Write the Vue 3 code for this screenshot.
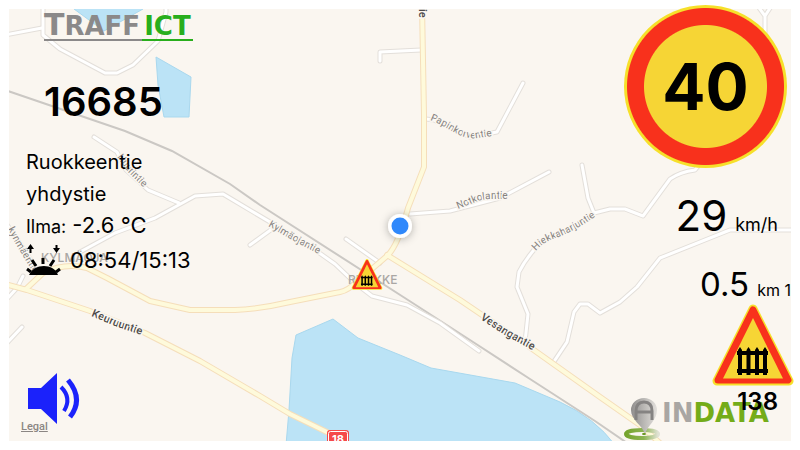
<script setup>
import { ref } from 'vue'

const soundOn = ref(true)

const mainRoads = [
  'M422 5 L424 115 L424 167 L408 208 Q398 246 387 256 L352 286 Q345 292 335 293 L290 302 Q260 309 235 310 L190 310 L150 301 L107 278 L87 268 Q65 262 43 273 L26 289',
  'M5 284 L27 290 L90 311 L145 333 L200 361 L260 396 L290 414 L335 436',
  'M387 255 L460 300 L531 348 L600 397 L640 425 L662 445'
]

const sideRoads = [
  'M5 35 L42 28',
  'M43 5 L43 35 L60 49 L105 73 L117 73 L133 65 L158 41 L166 12 L166 5',
  'M94 137 L117 152 L126 170 L148 190 L179 203',
  'M80 252 L115 233 L155 218 L195 196 L223 194 L270 222 L318 252 L335 264 L355 283 L372 296 L407 305 L440 323 L479 351',
  'M250 245 L272 229',
  'M346 239 L380 263',
  'M380 61 L380 52 L421 50',
  'M426 119 L434 120 L470 137 L497 132 L523 83',
  'M410 214 L450 211 L500 198 L549 172',
  'M582 165 L588 198 L594 213 L568 230 L540 243 Q526 258 519 272 L517 287 L528 314 L525 342',
  'M594 213 L610 209 L625 209 L643 216 L670 179 Q680 172 695 170 L715 145',
  'M553 363 L567 342 L574 312 L580 304 L588 304 L600 313 L620 302 L637 287 L660 258 L730 230 L795 230',
  'M757 5 L765 16 L772 5 M765 16 L765 40',
  'M5 222 L18 240 L36 268',
  'M5 345 L22 327',
  'M5 301 L17 288 L23 276'
]

const streets = [
  { id: 'papin', name: 'Papinkorventie', d: 'M430 120 Q440 124 450 130 Q466 140 478 138 L505 134', cls: 'minor' },
  { id: 'notko', name: 'Notkolantie', d: 'M458 209 L478 201 Q484 199 492 199 L530 199', cls: 'minor' },
  { id: 'hiekka', name: 'Hiekkaharjuntie', d: 'M536 251 Q543 242 556 238 Q575 231 602 212', cls: 'minor' },
  { id: 'kylma', name: 'Kylmäojantie', d: 'M268 226 L292 240 L330 260', cls: 'minor' },
  { id: 'huurin', name: 'Huurintie', d: 'M117 157 L128 172 L158 202', cls: 'minor' },
  { id: 'kynma', name: 'kynmäentie', d: 'M8 229 L17 246 L40 284', cls: 'minor' },
  { id: 'keuruu', name: 'Keuruuntie', d: 'M91 316 L115 326 L165 343', cls: 'major' },
  { id: 'vesanka', name: 'Vesangantie', d: 'M480 319 L505 335 L550 360', cls: 'major' }
]
</script>

<template>
  <main class="screen">
    <div class="map-frame">
      <svg class="map" viewBox="9 9 782 432" preserveAspectRatio="xMidYMid slice" role="img" aria-label="Map">
        <defs>
          <symbol id="crossing" viewBox="0 0 82 82">
            <path d="M41 5 L77 77 H5 Z" fill="#f6e02a" stroke="#f6e02a" stroke-width="9" stroke-linejoin="round" />
            <path d="M41 6 L76 76 H6 Z" fill="#f8311c" stroke="#f8311c" stroke-width="7" stroke-linejoin="round" />
            <path d="M41 14 L71 74.500 H11 Z" fill="#f6d535" />
            <path d="M25 47 h31 v4 h-31z M25 65 h31 v4 h-31z M26 71 V46 l2 -3 l2 3 V71z M34.500 71 V46 l2 -3 l2 3 V71z M43 71 V46 l2 -3 l2 3 V71z M51 71 V46 l2 -3 l2 3 V71z" fill="#000" />
          </symbol>
          <filter id="dotShadow" x="-60%" y="-60%" width="220%" height="220%">
            <feDropShadow dx="0" dy="1" stdDeviation="4" flood-color="#000" flood-opacity="0.3" />
          </filter>
          <path v-for="s in streets" :id="s.id" :key="s.id" :d="s.d" />
        </defs>

        <rect x="0" y="0" width="800" height="450" fill="#faf6f0" />
        <g class="water">
          <path d="M74 5 V9 L104 31 L143 9 V5 Z" />
          <path d="M156 57 L191 77 L189 117 L164 117 L158 85 Z" />
          <path d="M286 445 L289 410 L292 358 L296 335 L333 319 L358 338 L400 355 L431 368 L515 383 L560 402 Q595 418 615 445 Z" />
        </g>
        <path class="rail" d="M5 90 L125 131 L172 151 L230 184 L260 205 L408 300 L470 340 L530 379 L595 421 L630 445" />

        <path v-for="(d, i) in sideRoads" :key="'sc' + i" :d="d" class="side-case" />
        <path v-for="(d, i) in sideRoads" :key="'s' + i" :d="d" class="side" />
        <path v-for="(d, i) in mainRoads" :key="'mc' + i" :d="d" class="main-case" />
        <path v-for="(d, i) in mainRoads" :key="'m' + i" :d="d" class="main" />

        <text v-for="s in streets" :key="'t' + s.id" class="street" :class="s.cls">
          <textPath :href="'#' + s.id">{{ s.name }}</textPath>
        </text>
        <text class="street major" transform="translate(419 9) rotate(90)">ie</text>
        <text class="place" x="41" y="262">KYLMÄOJA</text>
        <text class="place" x="348" y="284">RUOKKE</text>

        <rect x="327" y="430" width="22" height="22" rx="3" fill="#f5494a" />
        <rect x="328.500" y="431.500" width="19" height="22" rx="2" fill="none" stroke="#fff" stroke-width="1" />
        <text class="shield" x="338" y="443">18</text>

        <circle cx="400" cy="226" r="12" fill="#fff" filter="url(#dotShadow)" />
        <circle cx="400" cy="226" r="8.500" fill="#2f88fb" />
        <use href="#crossing" x="351" y="259" width="32" height="31" />
      </svg>
    </div>

    <div class="hud">
      <section class="left">
        <h1 class="brand">
          <span class="brand-grey"><span class="brand-cap">T</span>RAFF</span><span class="brand-green">ICT</span>
        </h1>
        <div class="readouts">
          <p class="road-no">16685</p>
          <p class="road-name">Ruokkeentie<br>yhdystie</p>
          <p class="weather"><span class="weather-label">Ilma:</span><span>-2.6 °C</span></p>
          <p class="sun">
            <svg width="36" height="32" viewBox="0 0 36 32" aria-hidden="true">
              <path d="M3 31 C8 19 28 19 32 31 Z" />
              <g stroke="#000" stroke-width="3">
                <path d="M17 14 V20 M6 16 L10 22 M28 16 L24 22" />
                <path d="M1 25 L5 28 M34 25 L30 28" />
                <path d="M4.500 3 V9 M30.500 1 V6" stroke-width="2" />
              </g>
              <path d="M4.500 0 L8 5 H1 Z M30.500 9 L34 4 H27 Z" />
            </svg>
            <span>08:54/15:13</span>
          </p>
        </div>
        <div class="corner">
          <button class="sound" type="button" aria-label="Sound" :aria-pressed="soundOn" @click="soundOn = !soundOn">
            <svg width="53" height="53" viewBox="0 0 53 53" aria-hidden="true">
              <path d="M1 16 H14 L30 1 V52 L14 37 H1 Z" fill="#1b22fb" />
              <g v-if="soundOn" fill="none" stroke="#1b22fb" stroke-width="4">
                <path d="M34 15 Q45 26 37 39" />
                <path d="M41 8 Q57 27 43 45" stroke-width="5" />
              </g>
            </svg>
          </button>
          <a class="legal" href="#">Legal</a>
        </div>
      </section>

      <section class="right">
        <div class="limit">40</div>
        <p class="speed"><span class="speed-value">29</span><span class="unit">km/h</span></p>
        <p class="distance"><span class="distance-value">0.5</span><span class="unit distance-unit">km 1</span></p>
        <svg class="warning" width="82" height="82" role="img" aria-label="Level crossing"><use href="#crossing" width="82" height="82" /></svg>
        <p class="count">138</p>
        <div class="vendor">
          <svg width="38" height="44" viewBox="0 0 38 44" aria-hidden="true">
            <defs>
              <linearGradient id="pin" x1="0" x2="1">
                <stop offset="0" stop-color="#908e8d" />
                <stop offset="0.500" stop-color="#bab8b5" />
                <stop offset="1" stop-color="#e3e0dc" />
              </linearGradient>
              <linearGradient id="ring" x1="0" x2="1">
                <stop offset="0" stop-color="#75a32c" />
                <stop offset="0.550" stop-color="#8db452" />
                <stop offset="1" stop-color="#e0e2d4" />
              </linearGradient>
            </defs>
            <ellipse cx="18" cy="37" rx="16" ry="4" fill="none" stroke="url(#ring)" stroke-width="4" />
            <path d="M21 37 C18 28 7 23 7 13 A13 12 0 0 1 33 13 C33 23 24 28 21 37 Z" fill="url(#pin)" />
            <path d="M12 23 V14 Q12 5 20 5 Q28 5 28 14 V23 M12 15 H28" fill="none" stroke="#858382" stroke-width="3" />
            <ellipse cx="20" cy="37" rx="2" ry="1" fill="#5f9216" />
          </svg>
          <span class="vendor-name"><span class="vendor-grey">IN</span>DATA</span>
        </div>
      </section>
    </div>
  </main>
</template>

<style>
body {
  margin: 0;
  background: #fff;
}
</style>

<style scoped>
.screen {
  display: grid;
  font-family: Inter, "Liberation Sans", sans-serif;
  color: #000;
  background: #fff;
}
.map-frame,
.hud {
  grid-area: 1 / 1;
}
.map-frame {
  padding: 9px;
}
.map {
  display: block;
  width: 100%;
  height: auto;
}
.water path {
  fill: #bbe3f6;
  stroke: #a9d8ee;
  stroke-width: 1;
}
.rail {
  fill: none;
  stroke: #cbc8c4;
  stroke-width: 2;
}
.side-case,
.side,
.main-case,
.main {
  fill: none;
  stroke-linecap: round;
  stroke-linejoin: round;
}
.side-case {
  stroke: #e3dfda;
  stroke-width: 5;
}
.side {
  stroke: #fff;
  stroke-width: 3;
}
.main-case {
  stroke: #f5deba;
  stroke-width: 6;
}
.main {
  stroke: #fefadb;
  stroke-width: 4;
}
.street {
  font-family: Roboto, sans-serif;
  font-size: 10px;
  paint-order: stroke;
  stroke: #faf6f0;
  stroke-width: 3px;
}
.minor {
  fill: #85827f;
}
.major {
  font-size: 11px;
  fill: #4c4a48;
  font-weight: 500;
}
.place {
  font-size: 12px;
  font-weight: 500;
  fill: #aaa7a4;
}
.shield {
  font-size: 11px;
  font-weight: 700;
  fill: #fff;
  text-anchor: middle;
}
.hud {
  z-index: 1;
  display: flex;
  justify-content: space-between;
  padding: 5px 6px 9px 21px;
}
p,
h1 {
  margin: 0;
}
.left,
.right {
  display: flex;
  flex-direction: column;
}
.left {
  align-items: flex-start;
}
.right {
  align-items: flex-end;
}
.brand {
  display: flex;
  margin: 8px 0 0 23px;
  font-family: "DejaVu Sans", sans-serif;
  line-height: 26px;
  font-size: 26px;
  font-weight: 700;
}
.brand-grey {
  padding-right: 2px;
  color: #8b8989;
  border-bottom: 2px solid #8b8989;
}
.brand-cap {
  font-size: 30px;
  line-height: 24px;
}
.brand-green {
  padding: 0 2px;
  color: #28ae1c;
  border-bottom: 2px solid #28ae1c;
}
.readouts {
  padding-left: 5px;
  flex: 1;
}
.road-no {
  margin: 37px 0 20px 18px;
  font-size: 40px;
  font-weight: 600;
  line-height: 48px;
}
.road-name {
  font-size: 20px;
  line-height: 32px;
}
.weather {
  display: flex;
  align-items: baseline;
  gap: 6px;
  margin-bottom: 4px;
  font-size: 22px;
  line-height: 30px;
}
.weather-label {
  font-size: 18px;
  line-height: 20px;
}
.sun {
  display: flex;
  align-items: center;
  gap: 8px;
  font-size: 22px;
  line-height: 32px;
}
.corner {
  display: flex;
  flex-direction: column;
  align-items: flex-start;
  padding-bottom: 8px;
}
.sound {
  display: flex;
  margin: 0 0 -4px 6px;
  padding: 0;
  border: 0;
  background: none;
}
.legal {
  font-family: Roboto, sans-serif;
  font-size: 11px;
  font-weight: 500;
  line-height: 12px;
  color: #8b8683;
}
.limit {
  display: grid;
  place-items: center;
  width: 163px;
  height: 163px;
  margin-right: 7px;
  border-radius: 50%;
  background: radial-gradient(closest-side, #f6d535 61px, #f8311c 62px 78px, #f6e02a 79px);
  font-size: 64px;
  font-weight: 700;
}
.speed {
  display: flex;
  align-items: baseline;
  gap: 8px;
  margin: 24px 16px 24px 0;
  line-height: 48px;
}
.speed-value {
  font-size: 42px;
}
.unit {
  font-size: 18px;
  line-height: 20px;
}
.distance {
  display: flex;
  align-items: baseline;
  gap: 8px;
  margin-right: 3px;
  line-height: 40px;
}
.distance-value {
  font-size: 33px;
}
.distance-unit {
  font-size: 16px;
}
.warning {
  display: block;
}
.count {
  position: relative;
  z-index: 1;
  margin: 4px 16px 0 0;
  font-size: 24px;
  font-weight: 600;
  line-height: 24px;
}
.vendor {
  display: flex;
  align-self: flex-start;
  margin-top: -17px;
}
.vendor-name {
  font-family: "DejaVu Sans", sans-serif;
  font-size: 26px;
  font-weight: 700;
  line-height: 32px;
  color: #74ac19;
}
.vendor-grey {
  color: #a9a6a3;
}
</style>
